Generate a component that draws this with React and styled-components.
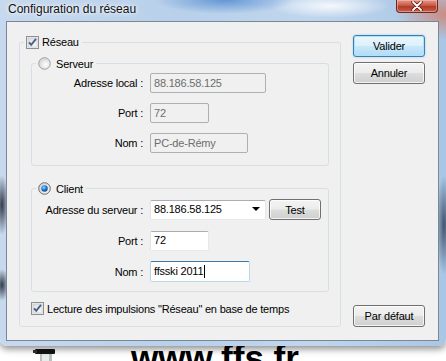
import React from 'react';
import styled, { createGlobalStyle, css } from 'styled-components';

const font = `"Liberation Sans", Arial, sans-serif`;

const GlobalStyle = createGlobalStyle`
  html, body { margin: 0; padding: 0; background: #fff; overflow: hidden; }
  * { box-sizing: border-box; }
`;

const Page = styled.div`
  width: 446px;
  height: 361px;
  overflow: hidden;
  display: flex;
  flex-direction: column;
  font-family: ${font};
`;

const Window = styled.div`
  position: relative;
  z-index: 1;
  padding: 0 7px 5px 6px;
  border-radius: 0 0 7px 7px;
  box-shadow: 0 3px 7px rgba(0, 0, 0, 0.45);
  background:
    radial-gradient(ellipse 70px 14px at 225px 0px, rgba(70, 130, 205, 0.75), transparent),
    radial-gradient(ellipse 60px 12px at 330px 6px, rgba(255, 255, 255, 0.85), transparent),
    radial-gradient(ellipse 50px 26px at 446px 14px, rgba(214, 120, 96, 0.75), transparent),
    radial-gradient(ellipse 7px 30px at 2px 205px, rgba(25, 30, 45, 0.85), transparent),
    radial-gradient(ellipse 7px 16px at 2px 285px, rgba(25, 30, 45, 0.85), transparent),
    radial-gradient(ellipse 8px 50px at 444px 225px, rgba(25, 35, 55, 0.7), transparent),
    linear-gradient(90deg, #c7d9ee 0%, #b8d0ea 40%, #c0d6ee 70%, #a9c6e4 100%);
`;

const TitleBar = styled.div`
  height: 21px;
  display: flex;
  justify-content: space-between;
  align-items: flex-start;
`;

const Title = styled.span`
  padding: 2px 0 0 2px;
  font-size: 12px;
  color: #101010;
  text-shadow: 0 0 6px #fff, 0 0 3px #fff;
`;

const CloseButton = styled.div`
  width: 42px;
  height: 13px;
  margin-right: 1px;
  display: flex;
  align-items: center;
  justify-content: center;
  border: 1px solid #6a2a22;
  border-top: none;
  border-radius: 0 0 4px 4px;
  background: linear-gradient(#e59a88 0%, #c75a47 45%, #b23a28 55%, #c8604a 100%);
  box-shadow: inset 0 0 0 1px rgba(255, 200, 190, 0.5);
`;

const Client = styled.div`
  height: 320px;
  background: #f0f0f0;
  border: 1px solid #7a8896;
  padding: 13px 14px 13px 12px;
  display: grid;
  grid-template-columns: 322px 72px;
  column-gap: 12px;
  font-size: 11px;
  letter-spacing: -0.2px;
  color: #000;
`;

const Group = styled.fieldset`
  margin: ${p => p.$mt || 0}px 0 0;
  padding: 0;
  min-width: 0;
  border: 1px solid #d5dfe5;
  border-radius: 3px;
`;

const Legend = styled.legend`
  margin-left: 4px;
  padding: 0 3px 0 2px;
  height: ${p => p.$h}px;
  display: flex;
  align-items: center;
  gap: ${p => p.$gap}px;
  font-size: 11px;
`;

const OuterBody = styled.div`
  padding: 8px 11px 0;
  display: flex;
  flex-direction: column;
`;

const FormGrid = styled.div`
  padding: ${p => p.$pad};
  display: grid;
  grid-template-columns: 111px auto;
  grid-auto-rows: ${p => p.$row}px;
  column-gap: 7px;
  row-gap: 10px;
  align-items: center;
`;

const Label = styled.span`
  text-align: right;
  white-space: nowrap;
`;

const Field = styled.div`
  width: ${p => p.$w}px;
  height: 20px;
  display: flex;
  align-items: center;
  padding: 0 3px 1px;
  border: 1px solid;
  border-radius: 2px;
  background: #fff;
  border-color: #abadb3 #e3e9ef #e3e9ef #e2e3ea;
  white-space: nowrap;
  ${p => p.$disabled && css`
    background: #f0f0f0;
    border-color: #afafaf;
    color: #6d6d6d;
  `}
  ${p => p.$focus && css`
    height: 21px;
    border-color: #3d7bad #b7d9ed #b7d9ed #b5cfe7;
  `}
`;

const Caret = styled.span`
  width: 1px;
  height: 13px;
  margin-left: 1px;
  background: #000;
`;

const ComboRow = styled.div`
  display: flex;
  align-items: center;
  gap: 3px;
`;

const Combo = styled(Field)`
  justify-content: space-between;
  padding-right: 5px;
`;

const Arrow = styled.span`
  width: 0;
  height: 0;
  border-left: 4px solid transparent;
  border-right: 4px solid transparent;
  border-top: 4px solid #000;
`;

const Button = styled.button`
  width: ${p => p.$w || 72}px;
  height: ${p => p.$h || 22}px;
  padding: 0;
  font-family: ${font};
  font-size: 11px;
  letter-spacing: -0.2px;
  color: #000;
  border: 1px solid #707070;
  border-radius: 3px;
  background: linear-gradient(#f3f3f3 0%, #ececec 48%, #dddddd 52%, #cfcfcf 100%);
  box-shadow: inset 0 0 0 1px rgba(255, 255, 255, 0.75);
  ${p => p.$default && css`
    border-color: #3c7fb1;
    background: linear-gradient(#eaf6fd 0%, #dcf1fc 48%, #c7e8fa 52%, #b1dbf3 100%);
    box-shadow: inset 0 0 0 1px #aee2fb, 0 0 2px rgba(60, 170, 230, 0.6);
  `}
`;

const Side = styled.div`
  display: flex;
  flex-direction: column;
  gap: 5px;
  & > :last-child { margin-top: auto; }
`;

const OptionRow = styled.label`
  margin-top: 10px;
  display: flex;
  align-items: center;
  gap: 3px;
  height: 13px;
`;

const Desktop = styled.div`
  flex: 1;
  background: #fff;
  overflow: hidden;
  display: flex;
  align-items: flex-start;
  gap: 76px;
  padding: 2px 0 0 33px;
`;

const Site = styled.span`
  font-size: 35px;
  font-weight: bold;
  line-height: 20px;
  color: #000;
`;

const CheckBox = () => (
  <svg width="13" height="13" viewBox="0 0 13 13">
    <defs>
      <linearGradient id="cbg" x1="0" y1="0" x2="1" y2="1">
        <stop offset="0" stopColor="#dcdcdc" />
        <stop offset="1" stopColor="#fbfbfb" />
      </linearGradient>
    </defs>
    <rect x="0.5" y="0.5" width="12" height="12" fill="#f4f4f4" stroke="#8e8f8f" />
    <rect x="2" y="2" width="9" height="9" fill="url(#cbg)" stroke="#b8bcc4" strokeWidth="0.6" />
    <path d="M3 6.3 L5.2 8.8 L10 2.8" fill="none" stroke="#4a5f8f" strokeWidth="1.9" />
  </svg>
);

const Radio = ({ checked }) => (
  <svg width="13" height="13" viewBox="0 0 13 13">
    <defs>
      <radialGradient id="rbg" cx="0.6" cy="0.6" r="0.6">
        <stop offset="0" stopColor="#ffffff" />
        <stop offset="1" stopColor="#d4d4d4" />
      </radialGradient>
      <radialGradient id="rdot" cx="0.4" cy="0.35" r="0.7">
        <stop offset="0" stopColor="#9fd6ff" />
        <stop offset="0.5" stopColor="#1f7fd4" />
        <stop offset="1" stopColor="#0a3f7a" />
      </radialGradient>
    </defs>
    <circle cx="6.5" cy="6.5" r="5.8" fill="url(#rbg)" stroke={checked ? '#5c6066' : '#9a9a9a'} strokeWidth="0.9" />
    {checked && <circle cx="6.5" cy="6.5" r="3.2" fill="url(#rdot)" />}
  </svg>
);

const CloseGlyph = () => (
  <svg width="12" height="10" viewBox="0 0 12 10">
    <path d="M2 1 L10 9 M10 1 L2 9" stroke="#5a1a12" strokeWidth="3.4" strokeLinecap="round" />
    <path d="M2 1 L10 9 M10 1 L2 9" stroke="#fff" strokeWidth="1.8" strokeLinecap="round" />
  </svg>
);

const DesktopIcon = () => (
  <svg width="22" height="14" viewBox="0 0 22 14">
    <rect x="2" y="1" width="20" height="5" rx="1" fill="#141414" />
    <rect x="0" y="2" width="4" height="3" fill="#333" />
    <rect x="7" y="6" width="12" height="8" fill="#b9c2c0" />
    <rect x="9" y="6" width="7" height="8" fill="#e8ecea" />
  </svg>
);

export default function App() {
  return (
    <Page>
      <GlobalStyle />
      <Window>
        <TitleBar>
          <Title>Configuration du réseau</Title>
          <CloseButton><CloseGlyph /></CloseButton>
        </TitleBar>
        <Client>
          <Group>
            <Legend $h={14} $gap={3}><CheckBox />Réseau</Legend>
            <OuterBody>
              <Group>
                <Legend $h={13} $gap={5}><Radio />Serveur</Legend>
                <FormGrid $pad="3px 0 12px" $row={20}>
                  <Label>Adresse local :</Label>
                  <Field $w={116} $disabled>88.186.58.125</Field>
                  <Label>Port :</Label>
                  <Field $w={59} $disabled>72</Field>
                  <Label>Nom :</Label>
                  <Field $w={98} $disabled>PC-de-Rémy</Field>
                </FormGrid>
              </Group>
              <Group $mt={16}>
                <Legend $h={13} $gap={5}><Radio checked />Client</Legend>
                <FormGrid $pad="4px 0 9px" $row={21}>
                  <Label>Adresse du serveur :</Label>
                  <ComboRow>
                    <Combo $w={116}>88.186.58.125<Arrow /></Combo>
                    <Button $w={52} $h={21}>Test</Button>
                  </ComboRow>
                  <Label>Port :</Label>
                  <Field $w={59}>72</Field>
                  <Label>Nom :</Label>
                  <Field $w={100} $focus>ffsski 2011<Caret /></Field>
                </FormGrid>
              </Group>
              <OptionRow><CheckBox />Lecture des impulsions "Réseau" en base de temps</OptionRow>
            </OuterBody>
          </Group>
          <Side>
            <Button $default>Valider</Button>
            <Button>Annuler</Button>
            <Button>Par défaut</Button>
          </Side>
        </Client>
      </Window>
      <Desktop>
        <DesktopIcon />
        <Site>www.ffs.fr</Site>
      </Desktop>
    </Page>
  );
}
